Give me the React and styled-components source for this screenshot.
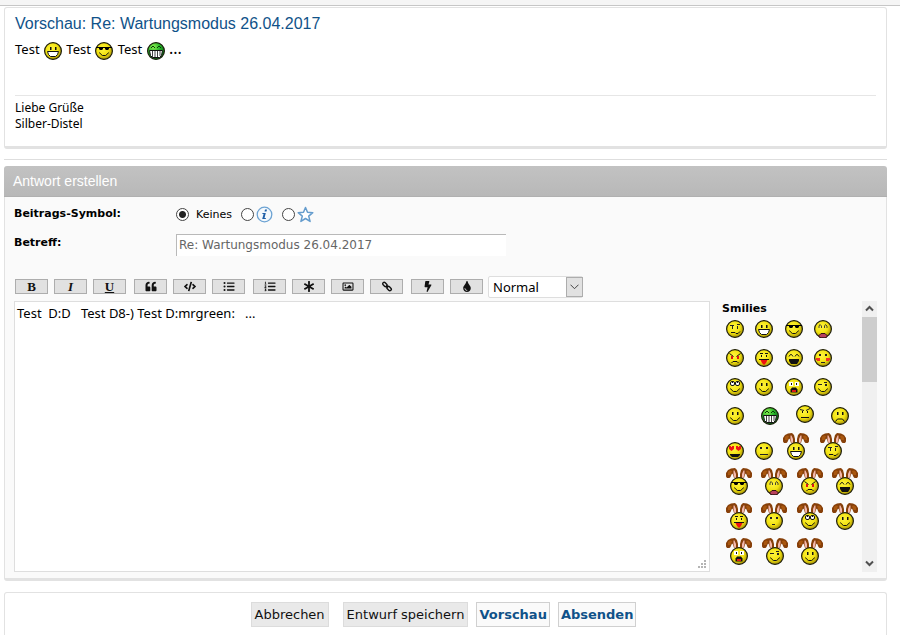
import React from 'react'
import styled, { createGlobalStyle } from 'styled-components';
import { FaQuoteLeft, FaCode, FaListUl, FaListOl, FaAsterisk, FaRegImage, FaBolt, FaTint } from 'react-icons/fa';

const smilies = [
  { width: 106, items: ['confused', 'grin', 'cool', 'cry'] },
  { width: 106, items: ['mad', 'razz', 'lol', 'blush'] },
  { width: 106, items: ['roll', 'smile', 'eek', 'wink'] },
  { width: 123, items: ['smile', 'mrgreen', 'brow', 'sad'] },
  { width: 120, items: ['love', 'neutral', 'bunny-grin', 'bunny-confused'] },
  { width: 132, items: ['bunny-cool', 'bunny-cry', 'bunny-mad', 'bunny-lol'] },
  { width: 132, items: ['bunny-razz', 'bunny-shy', 'bunny-roll', 'bunny-smile'] },
  { width: 97, items: ['bunny-eek', 'bunny-wink', 'bunny-smile'] },
]

const tools = [
  [['Fett', <b>B</b>], ['Kursiv', <i>I</i>], ['Unterstrichen', <u>U</u>]],
  [['Zitat', <FaQuoteLeft />], ['Code', <FaCode />], ['Liste', <FaListUl />]],
  [['Nummerierte Liste', <FaListOl />], ['Listenpunkt', <FaAsterisk />], ['Bild', <FaRegImage />], ['Link', <ChainIcon />]],
  [['Flash', <FaBolt />], ['Schriftfarbe', <FaTint />]],
]

export default function PostingEditor() {
  return (
    <Page>
      <GlobalStyle />
      <SvgDefs />
      <TopStrip />
      <Content>
        <Preview />
        <Divider />
        <Editor />
        <SubmitPanel>
          <GreyButton type='button'>Abbrechen</GreyButton>
          <ButtonGroup>
            <GreyButton type='button'>Entwurf speichern</GreyButton>
            <BlueButton type='button'>Vorschau</BlueButton>
            <BlueButton type='submit'>Absenden</BlueButton>
          </ButtonGroup>
        </SubmitPanel>
      </Content>
    </Page>
  )
}

const Preview = () => (
  <PreviewPanel>
    <PreviewTitle>Vorschau: Re: Wartungsmodus 26.04.2017</PreviewTitle>
    <PostText>
      Test <Smiley name='grin' /> Test <Smiley name='cool' /> Test <Smiley name='mrgreen' /> <Dots>...</Dots>
    </PostText>
    <Signature>Liebe Grüße<br />Silber-Distel</Signature>
  </PreviewPanel>
)

const Editor = () => (
  <EditorPanel>
    <EditorHead>Antwort erstellen</EditorHead>
    <EditorBody>
      <Field>
        <FieldName as='span' id='symbol-label'>Beitrags-Symbol:</FieldName>
        <Radios role='radiogroup' aria-labelledby='symbol-label'>
          <RadioLabel>
            <Radio type='radio' name='icon' defaultChecked />
            <RadioText>Keines</RadioText>
          </RadioLabel>
          <RadioLabel>
            <Radio type='radio' name='icon' aria-label='Info' />
            <InfoIcon />
          </RadioLabel>
          <RadioLabel>
            <Radio type='radio' name='icon' aria-label='Stern' />
            <StarIcon />
          </RadioLabel>
        </Radios>
      </Field>
      <Field>
        <FieldName htmlFor='subject'>Betreff:</FieldName>
        <Subject id='subject' type='text' defaultValue='Re: Wartungsmodus 26.04.2017' />
      </Field>
      <Toolbar>
        {
          tools.map((group, index) => <ToolGroup key={index}>
            {group.map(([title, icon]) => <Tool key={title} type='button' aria-label={title}>{icon}</Tool>)}
          </ToolGroup>)
        }
        <SelectWrap>
          <SizeSelect aria-label='Schriftgröße' defaultValue='Normal'>
            <option>Normal</option>
          </SizeSelect>
          <SelectArrow>
            <svg width='9' height='6' viewBox='0 0 9 6'><path d='M.5 .7l4 4 4-4' fill='none' stroke='#444' /></svg>
          </SelectArrow>
        </SelectWrap>
      </Toolbar>
      <Columns>
        <MessageWrap>
          <Message aria-label='Nachricht' spellCheck={false} defaultValue='Test  D:D   Test D8-) Test D:mrgreen:   ...' />
          <Grip width='9' height='9' viewBox='0 0 9 9'>
            <path d='M6 0h2v2h-2zM3 3h2v2h-2zM6 3h2v2h-2zM0 6h2v2h-2zM3 6h2v2h-2zM6 6h2v2h-2z' fill='#b4b4b4' />
          </Grip>
        </MessageWrap>
        <SmileyBox>
          <SmileyList>
            <SmileyTitle>Smilies</SmileyTitle>
            {
              smilies.map((row, index) => <SmileyRow key={index} $width={row.width}>
                {row.items.map(name => <Smiley key={name} name={name} />)}
              </SmileyRow>)
            }
          </SmileyList>
          <Scrollbar>
            <ScrollArrow type='button' aria-label='Nach oben'>
              <svg width='9' height='7' viewBox='0 0 9 7'><path d='M1 5.5L4.500 2 8 5.500' fill='none' stroke='#505050' strokeWidth='2' /></svg>
            </ScrollArrow>
            <Thumb />
            <ScrollArrow type='button' aria-label='Nach unten'>
              <svg width='9' height='7' viewBox='0 0 9 7'><path d='M1 1.500L4.500 5 8 1.500' fill='none' stroke='#505050' strokeWidth='2' /></svg>
            </ScrollArrow>
          </Scrollbar>
        </SmileyBox>
      </Columns>
    </EditorBody>
  </EditorPanel>
)

const eyes = <path d='M6 5h1.500v3h-1.500zM11 5h1.500v3h-1.500z' fill='#111' />
const happyEyes = <path d='M4 7.500l1.500-2h1l1.500 2M10 7.500l1.500-2h1l1.500 2' fill='none' stroke='#111' />
const smileMouth = <path d='M4.500 10.500l1 1.500 2 1.500h3l2-1.500 1-1.500' fill='none' stroke='#111' />

const faces = {
  smile: <>{eyes}{smileMouth}</>,
  grin: <>
    {eyes}
    <path d='M3.500 9.500h11l-1 3-2 2h-5l-2-2z' fill='#fff' stroke='#111' />
  </>,
  mrgreen: <>
    <path d='M4 6l2-2 2 2M10 6l2-2 2 2' fill='none' stroke='#063d06' />
    <path d='M2.500 8.500h13l-1 5-2 2h-7l-2-2z' fill='#fff' stroke='#111' />
    <path d='M5.500 9v6M8 9v6M10.500 9v6M13 9v5' stroke='#111' strokeWidth='.8' />
  </>,
  cool: <>
    <path d='M1 5h16v1h-16zM4 5h4v2l-1 1h-2l-1-1zM10 5h4v2l-1 1h-2l-1-1z' fill='#000' />
    {smileMouth}
  </>,
  cry: <>
    <path d='M5 8v-2l1-1.500 1.500 1.500v2M10.500 8v-2l1-1.500 1.500 1.500v2' fill='none' stroke='#333' strokeWidth='.9' />
    <path d='M5 17v-1.500l2-2h4l2 2v1.500l-2 .8h-4z' fill='#b8405c' stroke='#301010' />
  </>,
  mad: <>
    <path d='M3.500 4.500l4 3M14.500 4.500l-4 3' stroke='#111' />
    <path d='M5 7h2v3h-2zM11 7h2v3h-2z' fill='#e01414' />
    <path d='M5.500 14l1.500-1.500h4l1.500 1.500' fill='none' stroke='#111' />
  </>,
  razz: <>
    <path d='M5 4h3v1h-3zM10 4h3v1h-3zM6 6h1v2h-1zM11 6h1v2h-1z' fill='#111' />
    <path d='M4 10.500h10' stroke='#111' />
    <path d='M5.500 11h7l-1.500 3-2 2-2-2z' fill='#ee1111' />
  </>,
  lol: <>
    {happyEyes}
    <path d='M4 10h10v2l-2 3h-6l-2-3z' fill='#111' />
  </>,
  blush: <>
    <path d='M5 5h2v2h-2zM11 5h2v2h-2zM7 13h4v1h-4z' fill='#222' />
    <path d='M2 9h4v3h-3v-1h-1zM12 9h4v2h-1v1h-3z' fill='#f03224' />
  </>,
  shy: <path d='M5 5h2v2h-2zM11 5h2v2h-2zM7 12h3v1h-3z' fill='#222' />,
  roll: <>
    <rect x='4.500' y='3.500' width='4' height='4' rx='1.500' fill='#fff' stroke='#111' />
    <rect x='9.500' y='3.500' width='4' height='4' rx='1.500' fill='#fff' stroke='#111' />
    <path d='M6 4h1v1h-1zM11 4h1v1h-1z' fill='#111' />
    {smileMouth}
  </>,
  eek: <>
    <path d='M4 4h4v4h-4zM10 4h4v4h-4z' fill='#fff' />
    <path d='M6 5h1v2h-1zM11 5h1v2h-1z' fill='#111' />
    <path d='M7 9.500h4l1.500 2v3h-7v-3z' fill='#111' />
    <path d='M7 12h4v2h-4z' fill='#dc1818' />
  </>,
  wink: <>
    <path d='M4 6h4v1h-4zM11 6h2v2h-2zM10 4h3v1h-3z' fill='#222' />
    {smileMouth}
  </>,
  confused: <>
    <path d='M6 6h1v3h-1zM11 6h1v3h-1zM4 5h4v1h-4zM11 4h3v1h-3z' fill='#222' />
    <path d='M5 12.500h4l1 1h2l2-2' fill='none' stroke='#111' />
  </>,
  brow: <>
    <path d='M4 4.500l4 1M10 5.500l4-2' stroke='#222' />
    <path d='M6 6h1v2h-1zM11 6h1v2h-1zM5 12h8v1h-8z' fill='#111' />
  </>,
  sad: <>
    {eyes}
    <path d='M4.500 14.500l2-2.500h5l2 2.500' fill='none' stroke='#111' />
  </>,
  love: <>
    <path d='M3 4h2v1h1v-1h2v3l-2.500 2-2.500-2zM10 4h2v1h1v-1h2v3l-2.500 2-2.500-2z' fill='#ef1515' />
    <path d='M4 12h10v1l-2 2h-6l-2-2z' fill='#111' />
  </>,
  neutral: <path d='M5 5h2v2h-2zM11 5h2v2h-2zM5 12h8v1h-8z' fill='#222' />,
}

const Face = ({mood}) => (
  <>
    <circle cx='9' cy='9' r='8.400' fill={mood === 'mrgreen' ? 'url(#green)' : 'url(#yellow)'} stroke='#1c1c0c' strokeWidth='1.200' />
    {faces[mood]}
  </>
)

const Ear = () => (
  <>
    <path d='M0 5l2-3 3-1.500 4-.5 2 2 1 4v4h-4l-1-3.500-1-1-1.500 3.500-1 1h-2.500l-1-1.500z' fill='#87400a' />
    <path d='M2 4l2-1.500 2 .5-1.500 4h-2.500z' fill='#a9570f' />
    <path d='M7.500 2.500h1l1.500 3.500v4h-1.500l-1-4z' fill='#f3b8ac' />
  </>
)

const Smiley = ({name}) => {
  const bunny = name.startsWith('bunny-')
  if (bunny) {
    return(
      <SmileySvg width='26' height='27' viewBox='0 0 26 27'>
        <Ear />
        <g transform='translate(26 0) scale(-1 1)'><Ear /></g>
        <g transform='translate(4 9)'><Face mood={name.slice(6)} /></g>
      </SmileySvg>
    )
  }
  // the raised brow image has two empty rows at its bottom
  const height = name === 'brow' ? 20 : 18
  return(
    <SmileySvg width='18' height={height} viewBox={`0 0 18 ${height}`}>
      <Face mood={name} />
    </SmileySvg>
  )
}

const SvgDefs = () => (
  <Defs width='0' height='0' aria-hidden='true'>
    <defs>
      <radialGradient id='yellow' cx='.42' cy='.38' r='.62'>
        <stop offset='0' stopColor='#fff540' />
        <stop offset='.6' stopColor='#f2e210' />
        <stop offset='1' stopColor='#a89408' />
      </radialGradient>
      <radialGradient id='green' cx='.35' cy='.25' r='.75'>
        <stop offset='0' stopColor='#8bf04e' />
        <stop offset='.5' stopColor='#28b52a' />
        <stop offset='1' stopColor='#056b12' />
      </radialGradient>
    </defs>
  </Defs>
)

const InfoIcon = () => (
  <svg width='17' height='17' viewBox='0 0 17 17'>
    <circle cx='8.500' cy='8.500' r='7.300' fill='#f4f9fd' stroke='#6da3d3' strokeWidth='1.300' />
    <path d='M9 3.500h2l-.5 2h-2zM6.500 7h3.300l-1.300 5h1.500l-.3 1h-3.500l1.400-5h-1.300z' fill='#1e5fa8' />
  </svg>
)

const StarIcon = () => (
  <svg width='17' height='17' viewBox='0 0 17 17'>
    <path d='M8.500 1.500l2 4.800 5.300.4-4.100 3.400 1.400 5.300-4.600-2.900-4.600 2.900 1.400-5.300-4.100-3.400 5.300-.4z' fill='#fff' stroke='#649ccd' strokeWidth='1.500' strokeLinejoin='round' />
  </svg>
)

function ChainIcon() {
  return (
    <svg width='11' height='11' viewBox='0 0 11 11' fill='none' stroke='#111' strokeWidth='1.400'>
      <rect x='.9' y='2' width='5' height='3' rx='1.500' transform='rotate(45 3.400 3.500)' />
      <rect x='5.100' y='6' width='5' height='3' rx='1.500' transform='rotate(45 7.600 7.500)' />
      <path d='M4.500 4.500l2 2' />
    </svg>
  )
}

const GlobalStyle = createGlobalStyle`
  * {
    box-sizing: border-box;
  }
  body {
    margin: 0;
    background: #fff;
    color: #000;
    font-family: "DejaVu Sans", Verdana, sans-serif;
    font-size: 11px;
  }
`

const Page = styled.div`
  display: flex;
  flex-direction: column;
  min-height: 100vh;
`

const Defs = styled.svg`
  position: absolute;
`

const TopStrip = styled.div`
  height: 6px;
  background: #f5f5f5;
  border-bottom: 1px solid #c6c6c6;
`

const Content = styled.main`
  flex: 1;
  display: flex;
  flex-direction: column;
  padding: 1px 13px 0 4px;
`

const PreviewPanel = styled.section`
  padding: 6px 10px 14px;
  border: 1px solid #e2e2e2;
  border-bottom: 3px solid #e2e2e2;
  border-radius: 3px;
`

const PreviewTitle = styled.h3`
  margin: 0;
  color: #105289;
  font: 16px/20px "Liberation Sans", Arial, sans-serif;
`

const PostText = styled.div`
  padding-top: 4px;
  font: 13px/20px "Noto Sans", sans-serif;
  & svg {
    margin: 0 1px;
  }
`

const Dots = styled.span`
  font-size: 16px;
`

const Signature = styled.div`
  margin-top: 35px;
  padding-top: 4px;
  border-top: 1px solid #e6e6e6;
  font: 12px/16px "Noto Sans", sans-serif;
`

const Divider = styled.hr`
  width: 100%;
  margin: 10px 0 6px;
  border: 0;
  border-top: 1px solid #dedede;
`

const EditorPanel = styled.form`
  border-bottom: 3px solid #e2e2e2;
  border-radius: 3px;
`

const EditorHead = styled.h3`
  margin: 0;
  padding: 0 9px;
  border-bottom: 1px solid #b0b0b0;
  border-radius: 3px 3px 0 0;
  background: linear-gradient(#c2c2c2, #b8b8b8);
  color: #fff;
  font: 14px/30px "Liberation Sans", Arial, sans-serif;
`

const EditorBody = styled.div`
  padding: 8px 9px 6px;
  border: 1px solid #e2e2e2;
  border-top: 0;
  border-bottom: 0;
  background: #fafafa;
`

const Field = styled.div`
  display: flex;
  align-items: flex-start;
  min-height: 29px;
`

const FieldName = styled.label`
  width: 162px;
  font-weight: bold;
  line-height: 18px;
`

const Radios = styled.div`
  display: flex;
  gap: 9px;
`

const RadioLabel = styled.label`
  display: flex;
  align-items: center;
  gap: 2px;
  height: 19px;
`

const Radio = styled.input`
  appearance: none;
  width: 13px;
  height: 13px;
  margin: 0;
  border: 1px solid #444;
  border-radius: 50%;
  background: #fff;
  &:checked {
    background: radial-gradient(circle, #222 3px, #fff 4px);
  }
`

const RadioText = styled.span`
  padding-left: 5px;
`

const Subject = styled.input`
  width: 330px;
  height: 22px;
  padding: 0 2px;
  border: 0 solid #b9b9b9;
  border-width: 1px 0 0 1px;
  background: #fff;
  color: #666;
  font: 12px "DejaVu Sans", Verdana, sans-serif;
`

const Toolbar = styled.div`
  display: flex;
  align-items: center;
  gap: 8px;
  margin-top: 13px;
  padding: 0 1px;
`

const ToolGroup = styled.div`
  display: flex;
  gap: 6px;
`

const Tool = styled.button`
  display: flex;
  align-items: center;
  justify-content: center;
  width: 33px;
  height: 15px;
  padding: 0;
  border: 1px solid #adadad;
  background: #e1e1e1;
  color: #111;
  font: bold 13px/13px "Liberation Serif", serif;
  & svg {
    width: 12px;
    height: 11px;
  }
`

const SelectWrap = styled.div`
  position: relative;
  width: 95px;
  height: 22px;
  margin-left: -3px;
`

const SizeSelect = styled.select`
  appearance: none;
  width: 100%;
  height: 100%;
  padding: 0 4px;
  border: 1px solid #dedede;
  border-radius: 2px;
  background: #fff;
  color: #000;
  font: 13px "Noto Sans", sans-serif;
`

const SelectArrow = styled.span`
  position: absolute;
  top: 1px;
  right: 0;
  bottom: 1px;
  display: flex;
  align-items: center;
  justify-content: center;
  width: 17px;
  border: 1px solid #adadad;
  background: #e1e1e1;
  pointer-events: none;
`

const Columns = styled.div`
  display: flex;
  align-items: stretch;
  gap: 12px;
  margin-top: 3px;
`

const MessageWrap = styled.div`
  position: relative;
  flex: 1;
  display: flex;
`

const Message = styled.textarea`
  width: 100%;
  padding: 2px;
  border: 1px solid #dedede;
  background: #fff;
  color: #000;
  font: 13px/18px "Noto Sans", sans-serif;
  resize: none;
`

const Grip = styled.svg`
  position: absolute;
  right: 3px;
  bottom: 3px;
`

const SmileyBox = styled.div`
  display: flex;
  justify-content: space-between;
  width: 155px;
`

const SmileyList = styled.div`
  display: flex;
  flex-direction: column;
  gap: 8px;
  padding-bottom: 7px;
`

const SmileyTitle = styled.strong`
  margin-bottom: -8px;
  line-height: 16px;
`

const SmileyRow = styled.div`
  display: flex;
  align-items: flex-end;
  justify-content: space-between;
  width: ${props => props.$width}px;
  min-height: 21px;
  margin-left: 4px;
`

const SmileySvg = styled.svg`
  flex: none;
  vertical-align: middle;
`

const Scrollbar = styled.div`
  display: flex;
  flex-direction: column;
  width: 15px;
  background: #f0f0f0;
`

const ScrollArrow = styled.button`
  display: flex;
  align-items: center;
  justify-content: center;
  height: 16px;
  padding: 0;
  border: 0;
  background: none;
  &:last-child {
    margin-top: auto;
  }
`

const Thumb = styled.div`
  height: 65px;
  background: #cdcdcd;
`

const SubmitPanel = styled.div`
  flex: 1;
  display: flex;
  align-items: flex-start;
  justify-content: center;
  gap: 14px;
  margin-top: 11px;
  padding: 9px 4px 8px 0;
  border: 1px solid #e2e2e2;
  border-bottom: 0;
  border-radius: 3px 3px 0 0;
`

const ButtonGroup = styled.div`
  display: flex;
  gap: 8px;
`

const GreyButton = styled.button`
  height: 25px;
  padding: 0 3px;
  border: 1px solid #dcdcdc;
  background: #e9e9e9;
  color: #111;
  font: 13px "DejaVu Sans", Verdana, sans-serif;
`

const BlueButton = styled(GreyButton)`
  padding: 0 2px;
  border-color: #d0d0d0;
  background: #fafafa;
  color: #105289;
  font-weight: bold;
`
